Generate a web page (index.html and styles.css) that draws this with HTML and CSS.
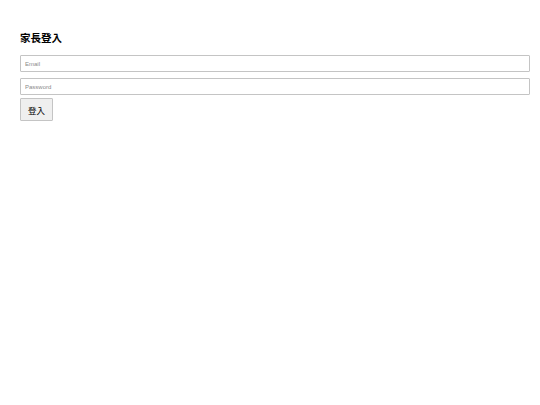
FILE: index.html
```html
<!DOCTYPE html>
<html lang="zh-Hant">
<head>
<meta charset="utf-8">
<title>家長登入</title>
<link rel="stylesheet" href="styles.css">
</head>
<body>
<main class="page">
  <h1 class="title">家長登入</h1>
  <form class="login">
    <input class="field" type="email" placeholder="Email">
    <input class="field" type="password" placeholder="Password">
    <button class="submit" type="button">登入</button>
  </form>
</main>
</body>
</html>
```
FILE: styles.css
```css
html, body {
  margin: 0;
  padding: 0;
  background: #fff;
}
body {
  font-family: "Liberation Sans", "Noto Sans CJK TC", sans-serif;
  color: #000;
}
.page {
  padding: 31px 10px 0 20px;
}
.title {
  margin: 0 0 10px 0;
  font-size: 10.5px;
  line-height: 14px;
  font-weight: bold;
}
.login {
  display: flex;
  flex-direction: column;
  align-items: flex-start;
}
.field {
  box-sizing: border-box;
  width: 510px;
  height: 17px;
  margin: 0 0 6px 0;
  padding: 0 4px;
  border: 1px solid #c4c4c4;
  border-radius: 1px;
  font-family: "Liberation Sans", sans-serif;
  font-size: 6px;
  outline: none;
}
.field + .field { margin-bottom: 3px; }
.field::placeholder { color: #8a8a8a; }
.submit {
  box-sizing: border-box;
  width: 33px;
  height: 23px;
  padding: 0;
  border: 1px solid #c4c4c4;
  border-radius: 1px;
  background: #efefef;
  font-family: "Liberation Sans", "Noto Sans CJK TC", sans-serif;
  font-size: 8.5px;
  color: #000;
}
```
